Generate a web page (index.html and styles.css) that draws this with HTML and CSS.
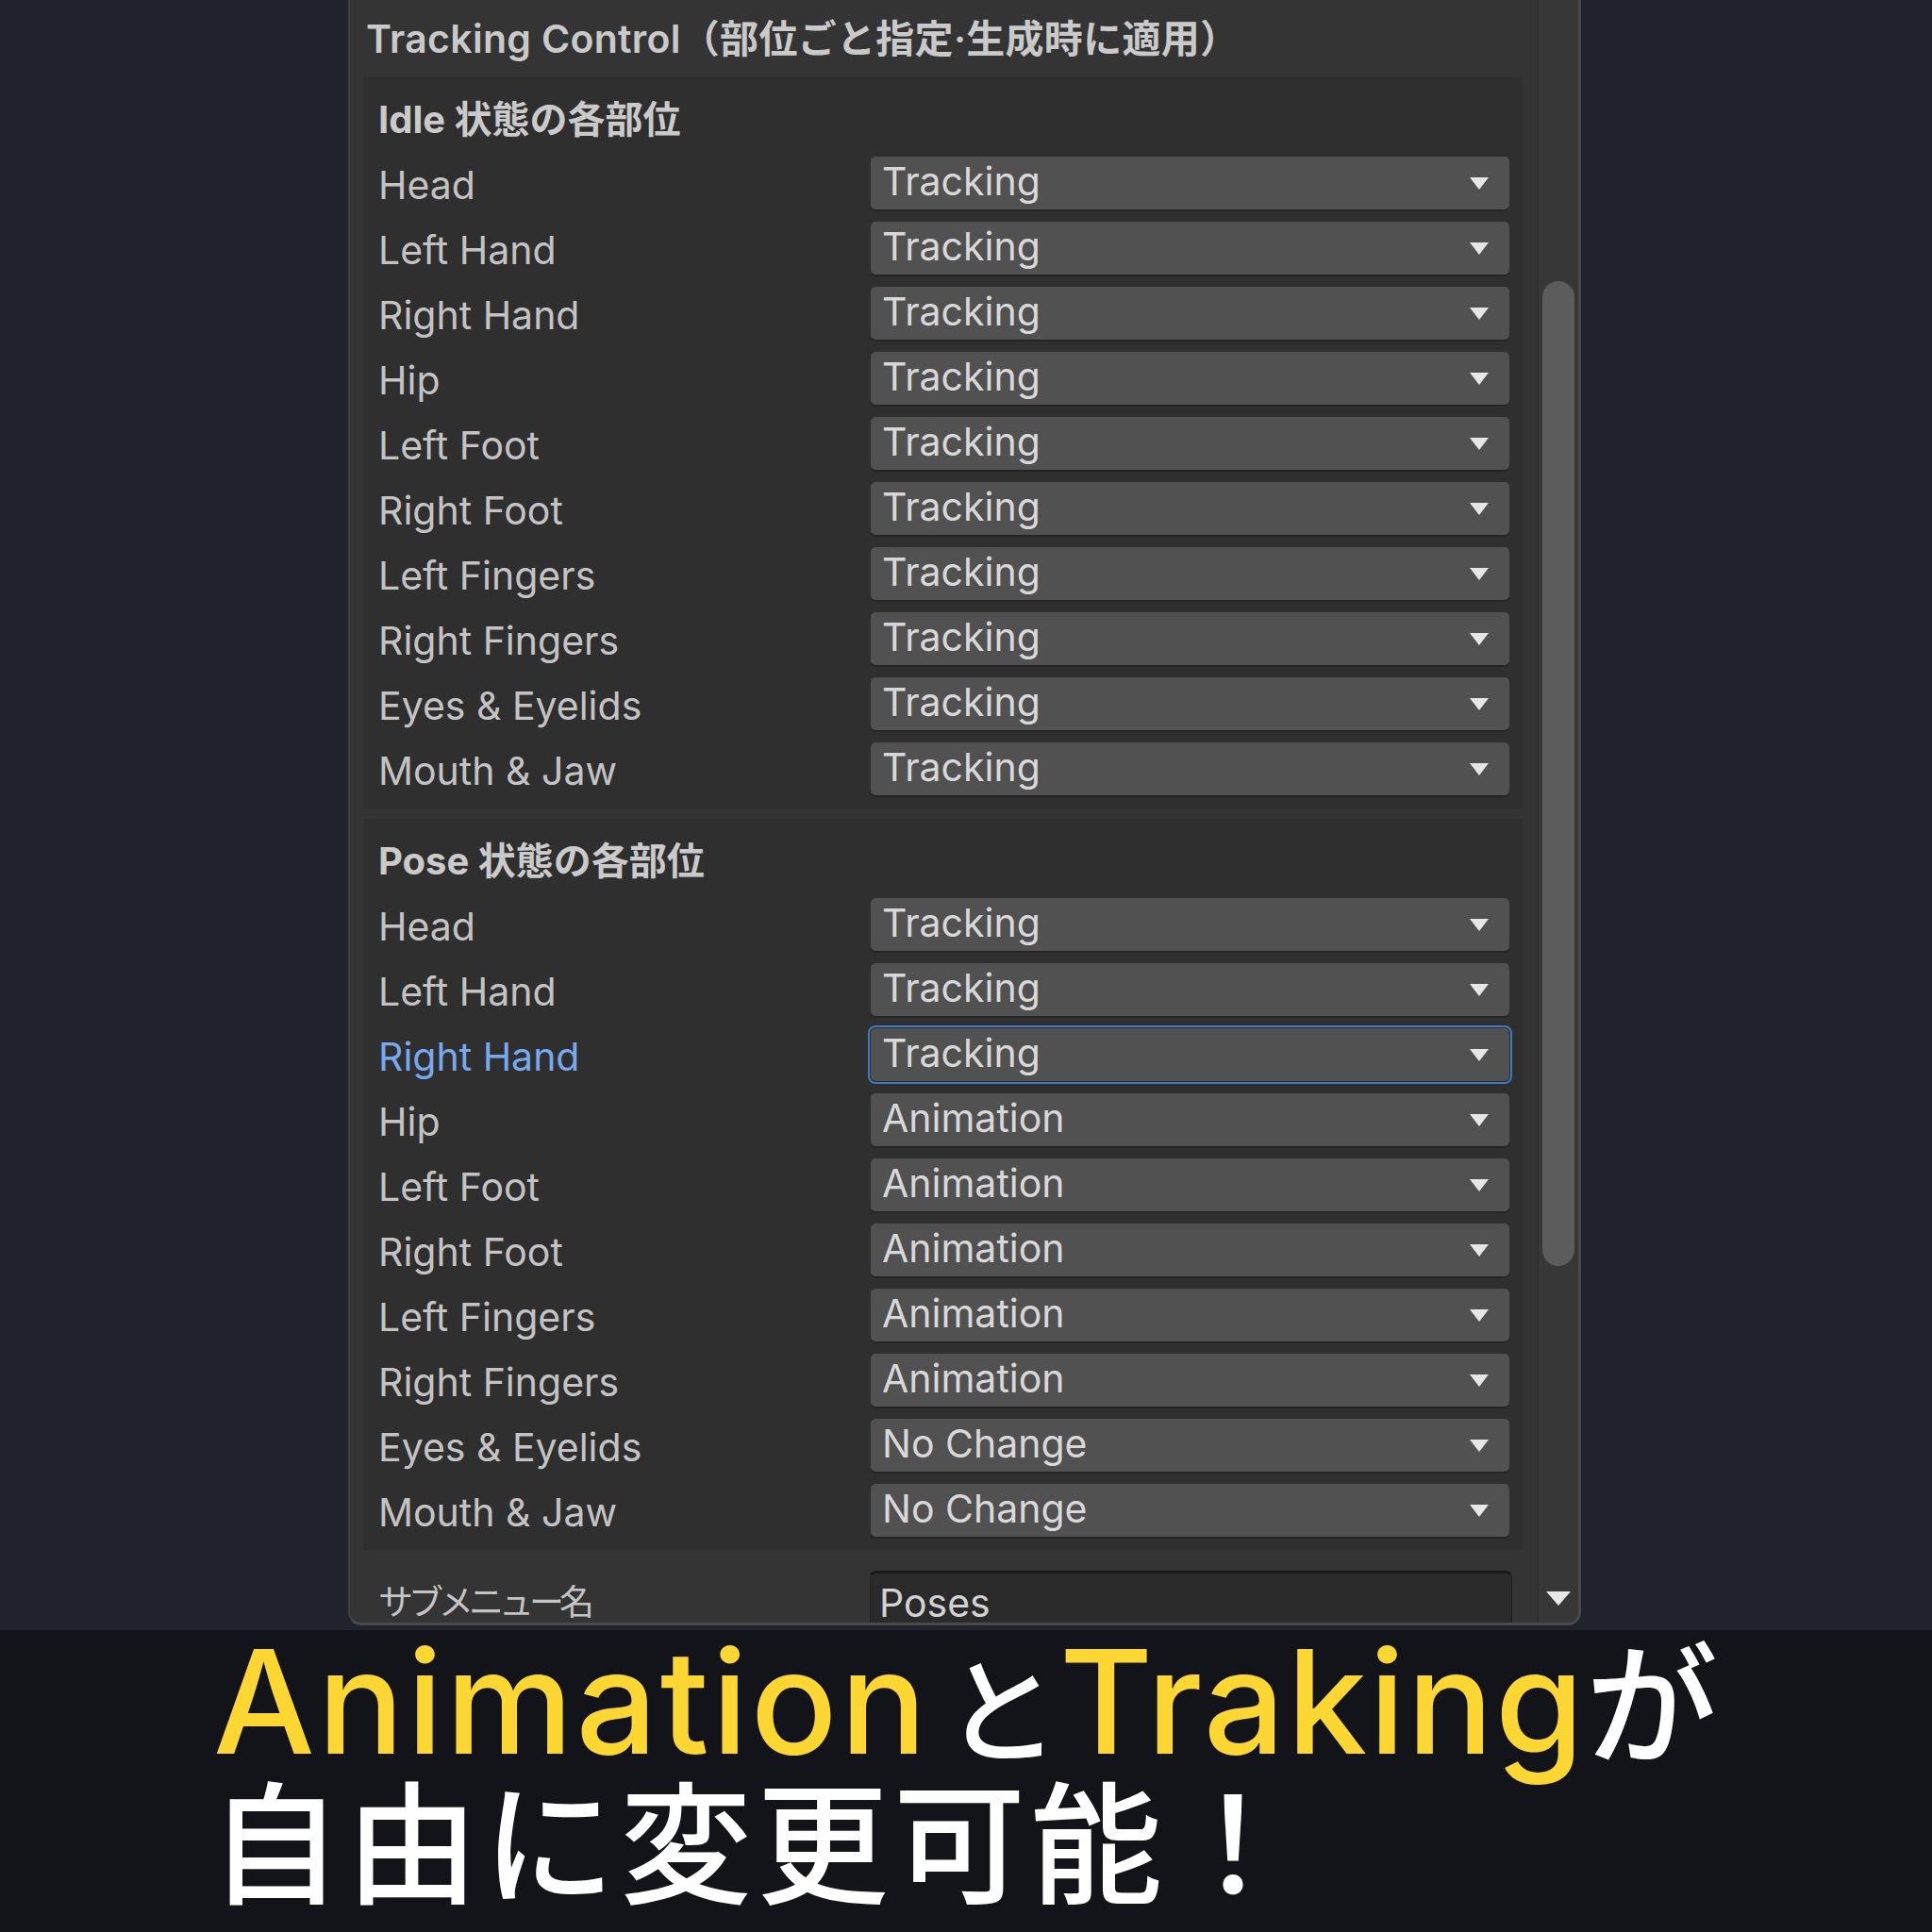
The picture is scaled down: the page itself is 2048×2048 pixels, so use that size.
FILE: index.html
```html
<!DOCTYPE html>
<html lang="ja">
<head>
<meta charset="utf-8">
<title>Tracking Control</title>
<link rel="stylesheet" href="styles.css">
</head>
<body>
<div class="screen">
  <div class="panel">
    <div class="content">
      <div class="title">Tracking Control（部位ごと指定·生成時に適用）</div>

      <div class="group">
        <div class="row heading">Idle 状態の各部位</div>
        <div class="row"><span class="label">Head</span><div class="dropdown"><span>Tracking</span><svg class="caret" viewBox="0 0 20 13"><path d="M0 0H20L10 13Z"/></svg></div></div>
        <div class="row"><span class="label">Left Hand</span><div class="dropdown"><span>Tracking</span><svg class="caret" viewBox="0 0 20 13"><path d="M0 0H20L10 13Z"/></svg></div></div>
        <div class="row"><span class="label">Right Hand</span><div class="dropdown"><span>Tracking</span><svg class="caret" viewBox="0 0 20 13"><path d="M0 0H20L10 13Z"/></svg></div></div>
        <div class="row"><span class="label">Hip</span><div class="dropdown"><span>Tracking</span><svg class="caret" viewBox="0 0 20 13"><path d="M0 0H20L10 13Z"/></svg></div></div>
        <div class="row"><span class="label">Left Foot</span><div class="dropdown"><span>Tracking</span><svg class="caret" viewBox="0 0 20 13"><path d="M0 0H20L10 13Z"/></svg></div></div>
        <div class="row"><span class="label">Right Foot</span><div class="dropdown"><span>Tracking</span><svg class="caret" viewBox="0 0 20 13"><path d="M0 0H20L10 13Z"/></svg></div></div>
        <div class="row"><span class="label">Left Fingers</span><div class="dropdown"><span>Tracking</span><svg class="caret" viewBox="0 0 20 13"><path d="M0 0H20L10 13Z"/></svg></div></div>
        <div class="row"><span class="label">Right Fingers</span><div class="dropdown"><span>Tracking</span><svg class="caret" viewBox="0 0 20 13"><path d="M0 0H20L10 13Z"/></svg></div></div>
        <div class="row"><span class="label">Eyes &amp; Eyelids</span><div class="dropdown"><span>Tracking</span><svg class="caret" viewBox="0 0 20 13"><path d="M0 0H20L10 13Z"/></svg></div></div>
        <div class="row"><span class="label">Mouth &amp; Jaw</span><div class="dropdown"><span>Tracking</span><svg class="caret" viewBox="0 0 20 13"><path d="M0 0H20L10 13Z"/></svg></div></div>
      </div>

      <div class="group">
        <div class="row heading">Pose 状態の各部位</div>
        <div class="row"><span class="label">Head</span><div class="dropdown"><span>Tracking</span><svg class="caret" viewBox="0 0 20 13"><path d="M0 0H20L10 13Z"/></svg></div></div>
        <div class="row"><span class="label">Left Hand</span><div class="dropdown"><span>Tracking</span><svg class="caret" viewBox="0 0 20 13"><path d="M0 0H20L10 13Z"/></svg></div></div>
        <div class="row focused"><span class="label">Right Hand</span><div class="dropdown"><span>Tracking</span><svg class="caret" viewBox="0 0 20 13"><path d="M0 0H20L10 13Z"/></svg></div></div>
        <div class="row"><span class="label">Hip</span><div class="dropdown"><span>Animation</span><svg class="caret" viewBox="0 0 20 13"><path d="M0 0H20L10 13Z"/></svg></div></div>
        <div class="row"><span class="label">Left Foot</span><div class="dropdown"><span>Animation</span><svg class="caret" viewBox="0 0 20 13"><path d="M0 0H20L10 13Z"/></svg></div></div>
        <div class="row"><span class="label">Right Foot</span><div class="dropdown"><span>Animation</span><svg class="caret" viewBox="0 0 20 13"><path d="M0 0H20L10 13Z"/></svg></div></div>
        <div class="row"><span class="label">Left Fingers</span><div class="dropdown"><span>Animation</span><svg class="caret" viewBox="0 0 20 13"><path d="M0 0H20L10 13Z"/></svg></div></div>
        <div class="row"><span class="label">Right Fingers</span><div class="dropdown"><span>Animation</span><svg class="caret" viewBox="0 0 20 13"><path d="M0 0H20L10 13Z"/></svg></div></div>
        <div class="row"><span class="label">Eyes &amp; Eyelids</span><div class="dropdown"><span>No Change</span><svg class="caret" viewBox="0 0 20 13"><path d="M0 0H20L10 13Z"/></svg></div></div>
        <div class="row"><span class="label">Mouth &amp; Jaw</span><div class="dropdown"><span>No Change</span><svg class="caret" viewBox="0 0 20 13"><path d="M0 0H20L10 13Z"/></svg></div></div>
      </div>

      <div class="row submenu"><span class="label jp">サブメニュー名</span><div class="textfield">Poses</div></div>
    </div>
    <div class="scrollbar">
      <div class="thumb"></div>
      <svg class="scroll-arrow" viewBox="0 0 26 15"><path d="M0 0H26L13 15Z"/></svg>
    </div>
  </div>

  <div class="caption">
    <div class="line1"><span class="yellow anim">Animation</span><span class="jp-w to">と</span><span class="yellow trak">Traking</span><span class="jp-w ga">が</span></div>
    <div class="line2">自由に変更可能！</div>
  </div>
</div>
</body>
</html>
```

FILE: styles.css
```css
* {
  box-sizing: border-box;
  margin: 0;
  padding: 0;
}

html,
body {
  width: 2048px;
  height: 2048px;
}

body {
  background: #1e232c;
  font-family: Inter, "Noto Sans CJK JP", sans-serif;
  overflow: hidden;
}

.screen {
  width: 2048px;
  height: 2048px;
  display: flex;
  flex-direction: column;
}

/* ---------- inspector panel ---------- */
.panel {
  margin-left: 369px;
  width: 1307px;
  height: 1723px;
  display: flex;
  background: #343434;
  border-left: 2px solid #3f3f3f;
  border-right: 3px solid #4a4a4a;
  border-bottom: 3px solid #4a4a4a;
  border-radius: 0 0 14px 14px;
  overflow: hidden;
}

.content {
  flex: 1;
  display: flex;
  flex-direction: column;
  overflow: hidden;
}

.title {
  height: 84px;
  line-height: 82px;
  padding-left: 17px;
  font-size: 41px;
  font-weight: 600;
  letter-spacing: 0.3px;
  color: #c9c9c9;
  white-space: nowrap;
}

.group {
  margin-left: 14px;
  width: 1229px;
  background: #2f2f2f;
  padding: 13px 14px 16px 16px;
  display: flex;
  flex-direction: column;
  gap: 13px;
}

.group + .group {
  margin-top: 11px;
}

.row {
  height: 56px;
  display: grid;
  grid-template-columns: 522px 677px;
  align-items: center;
  font-size: 41px;
  color: #c3c3c3;
  white-space: nowrap;
}

.label {
  line-height: 56px;
  padding-top: 4px;
}

.heading {
  display: flex;
  font-size: 40px;
  font-weight: 700;
  color: #cacaca;
  padding-top: 2px;
}

.dropdown {
  height: 56px;
  background: #515151;
  border-radius: 5px;
  box-shadow: 0 2px 0 #252525;
  display: flex;
  align-items: center;
  justify-content: space-between;
  padding: 0 22px 0 12px;
  color: #d8d8d8;
  font-size: 41px;
}

.dropdown span {
  line-height: 56px;
  margin-top: -4px;
}

.caret {
  width: 20px;
  height: 13px;
  fill: #e6e6e6;
}

.focused .label {
  color: #78a9ef;
}

.focused .dropdown {
  outline: 2px solid #3b7bc4;
  outline-offset: 1px;
}

.submenu {
  margin-top: 22px;
  height: 64px;
  padding-left: 30px;
  grid-template-columns: 521px 681px;
}

.jp {
  font-size: 37px;
  letter-spacing: -5px;
  color: #c4c4c4;
}

.textfield {
  height: 64px;
  background: #2a2a2a;
  border-top: 3px solid #1b1b1b;
  border-left: 1px solid #222;
  border-right: 1px solid #222;
  border-radius: 6px 6px 0 0;
  padding-left: 9px;
  line-height: 62px;
  font-size: 41px;
  color: #d2d2d2;
}

/* ---------- scrollbar ---------- */
.scrollbar {
  width: 43px;
  display: flex;
  flex-direction: column;
  align-items: center;
  background: #373737;
  border-left: 1px solid #2e2e2e;
  padding-top: 298px;
}

.thumb {
  width: 34px;
  height: 1044px;
  background: #5c5c5c;
  border-radius: 17px;
}

.scroll-arrow {
  margin-top: auto;
  margin-bottom: 18px;
  width: 26px;
  height: 15px;
  fill: #e8e8e8;
}

/* ---------- caption ---------- */
.caption {
  margin-top: 5px;
  height: 320px;
  background: #131419;
  padding-left: 226px;
  color: #ffffff;
  white-space: nowrap;
}

.line1 {
  height: 141px;
  line-height: 141px;
  font-size: 152px;
  font-weight: 500;
  display: flex;
  align-items: baseline;
}

.yellow {
  color: #fcd733;
  font-family: Inter, sans-serif;
}

.anim {
  letter-spacing: 3px;
}

.trak {
  letter-spacing: 2px;
}

.jp-w {
  font-family: "Noto Sans CJK JP", sans-serif;
  font-weight: 500;
  color: #ffffff;
}

.to {
  font-size: 122px;
  margin: 0 0 0 16px;
}

.ga {
  font-size: 140px;
  margin-left: 0;
}

.line2 {
  margin-left: -4px;
  margin-top: -8px;
  font-family: "Noto Sans CJK JP", sans-serif;
  font-size: 140px;
  font-weight: 500;
  line-height: 170px;
  color: #ffffff;
  letter-spacing: 5px;
}
```
